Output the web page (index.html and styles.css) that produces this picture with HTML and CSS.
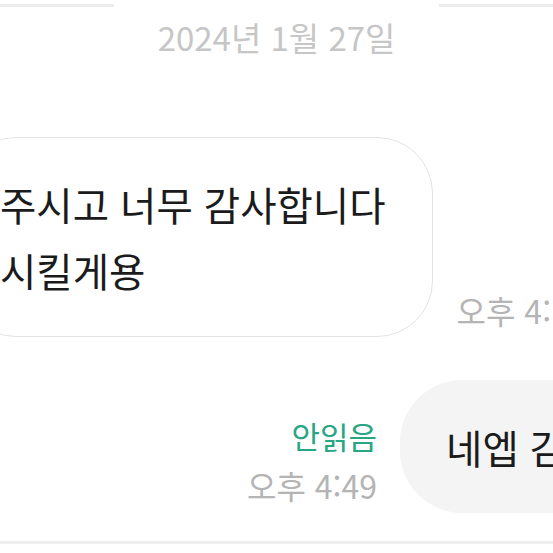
FILE: index.html
```html
<!DOCTYPE html>
<html lang="ko">
<head>
  <meta charset="UTF-8" />
  <meta name="viewport" content="width=device-width, initial-scale=1.0" />
  <title>채팅</title>
  <link rel="stylesheet" href="styles.css">
</head>
<body>
  <div id="chat">
    <div class="date-divider">
      <span class="line"></span>
      <span class="date">2024년 1월 27일</span>
      <span class="line"></span>
    </div>

    <div class="msg-row incoming">
      <div class="bubble">주시고 너무 감사합니다<br>시킬게용</div>
      <div class="meta">
        <span class="time">오후 4:17</span>
      </div>
    </div>

    <div class="msg-row outgoing">
      <div class="meta">
        <span class="unread">안읽음</span>
        <span class="time">오후 4:49</span>
      </div>
      <div class="bubble">네엡 감사합니다</div>
    </div>
  </div>

  <div id="input-bar"></div>
</body>
</html>
```

FILE: styles.css
```css
html, body {
  margin: 0;
  padding: 0;
  background-color: #ffffff;
  font-family: "Noto Sans CJK KR", "Noto Sans", sans-serif;
  color: #1b1b1b;
  width: 553px;
  height: 553px;
  overflow: hidden;
}
#chat {
  width: 553px;
  height: 541px;
  overflow: hidden;
}
.date-divider {
  display: flex;
  align-items: flex-start;
  gap: 44px;
}
.date-divider .line {
  flex: 1;
  height: 3px;
  margin-top: 4px;
  background-color: #ececec;
}
.date {
  margin-top: 17px;
  font-size: 33px;
  line-height: 40px;
  color: #c6c6c6;
  white-space: nowrap;
}
.msg-row {
  display: flex;
  align-items: flex-end;
  white-space: nowrap;
}
.msg-row.incoming {
  margin-top: 80px;
  margin-left: -40px;
  gap: 24px;
}
.msg-row.outgoing {
  margin-top: 43px;
  margin-left: 247px;
  gap: 23px;
}
.bubble {
  font-size: 39.5px;
  line-height: 66px;
}
.incoming .bubble {
  background-color: #ffffff;
  border: 1.5px solid #e3e3e3;
  border-radius: 56px;
  padding: 33px 46px 33px 39px;
}
.outgoing .bubble {
  background-color: #f4f4f4;
  border-radius: 62px;
  padding: 34px 60px 33px 46px;
}
.meta {
  display: flex;
  flex-direction: column;
  align-items: flex-end;
}
.incoming .meta {
  padding-bottom: 8px;
}
.outgoing .meta {
  padding-bottom: 9px;
}
.time {
  font-size: 32px;
  line-height: 38px;
  color: #b4b4b4;
}
.unread {
  font-size: 31px;
  line-height: 40px;
  color: #27a585;
  margin-bottom: 10px;
}
#input-bar {
  height: 3px;
  background-color: #efefef;
}
```
